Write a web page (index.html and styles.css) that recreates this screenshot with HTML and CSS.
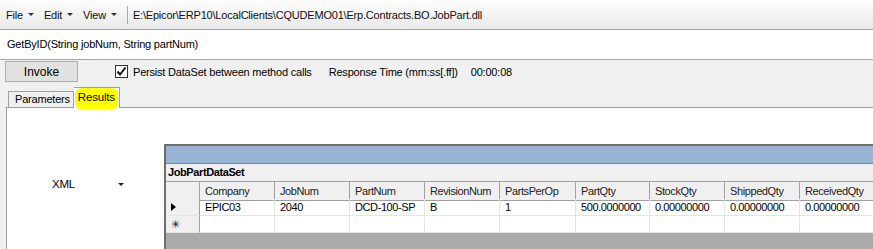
FILE: index.html
```html
<!DOCTYPE html>
<html lang="en">
<head>
  <meta charset="UTF-8">
  <title>Business Object Tester</title>
  <link rel="stylesheet" href="styles.css">
</head>
<body>
  <div class="menubar">
    <span class="menu">File <i class="caret"></i></span>
    <span class="menu">Edit <i class="caret"></i></span>
    <span class="menu">View <i class="caret"></i></span>
    <span class="sep"></span>
    <span class="path">E:\Epicor\ERP10\LocalClients\CQUDEMO01\Erp.Contracts.BO.JobPart.dll</span>
  </div>

  <div class="method">GetByID(String jobNum, String partNum)</div>

  <div class="toolbar">
    <button class="invoke">Invoke</button>
    <label class="persist">
      <span class="check">
        <svg width="11" height="11" viewBox="0 0 11 11"><path d="M1.5 5.5 L4 8.5 L9.5 1.5" fill="none" stroke="#111" stroke-width="2"/></svg>
      </span>
      Persist DataSet between method calls
    </label>
    <span class="resp-label">Response Time (mm:ss[.ff])</span>
    <span class="resp-value">00:00:08</span>
  </div>

  <div class="tabs">
    <div class="tab">Parameters</div>
    <div class="tab active"><span class="mark">Results</span></div>
  </div>

  <div class="panel">
    <div class="side">
      <div class="combo">
        <span>XML</span>
        <i class="drop"></i>
      </div>
    </div>
    <div class="grid-wrap">
      <div class="caption"></div>
      <div class="dataset">JobPartDataSet</div>
      <div class="grid">
        <div class="rh hd"></div>
        <div class="hd">Company</div>
        <div class="hd">JobNum</div>
        <div class="hd">PartNum</div>
        <div class="hd">RevisionNum</div>
        <div class="hd">PartsPerOp</div>
        <div class="hd">PartQty</div>
        <div class="hd">StockQty</div>
        <div class="hd">ShippedQty</div>
        <div class="hd">ReceivedQty</div>

        <div class="rh"><i class="arrow"></i></div>
        <div class="cell">EPIC03</div>
        <div class="cell">2040</div>
        <div class="cell">DCD-100-SP</div>
        <div class="cell">B</div>
        <div class="cell">1</div>
        <div class="cell">500.0000000</div>
        <div class="cell">0.00000000</div>
        <div class="cell">0.00000000</div>
        <div class="cell">0.00000000</div>

        <div class="rh star">&#x2733;</div>
        <div class="cell"></div>
        <div class="cell"></div>
        <div class="cell"></div>
        <div class="cell"></div>
        <div class="cell"></div>
        <div class="cell"></div>
        <div class="cell"></div>
        <div class="cell"></div>
        <div class="cell"></div>
      </div>
      <div class="empty"></div>
    </div>
  </div>
</body>
</html>
```

FILE: styles.css
```css
body {
  margin: 0;
  width: 873px;
  height: 249px;
  overflow: hidden;
  background-color: #f0f0f0;
  font-family: "Liberation Sans", Arial, sans-serif;
  font-size: 11px;
  letter-spacing: -0.2px;
  color: #000;
}

.menubar {
  height: 29px;
  display: flex;
  align-items: center;
  padding-left: 6px;
  background: linear-gradient(#fdfdfd, #f3f3f3 50%, #e9e9ea);
  border-bottom: 1px solid #a6a6ab;
  font-size: 11px;
  color: #111;
}

.menu {
  margin-right: 10px;
  display: flex;
  align-items: center;
}

.caret {
  display: inline-block;
  margin-left: 5px;
  border-left: 3px solid transparent;
  border-right: 3px solid transparent;
  border-top: 3px solid #333;
}

.sep {
  width: 1px;
  height: 18px;
  background-color: #a8a8a8;
  margin: 0 5px 0 0;
}

.method {
  height: 29px;
  line-height: 29px;
  padding-left: 7px;
  background-color: #fff;
  border-bottom: 1px solid #a6a6ab;
  font-size: 11px;
}

.toolbar {
  height: 26px;
  display: flex;
  align-items: center;
  padding-left: 5px;
}

.invoke {
  width: 73px;
  height: 21px;
  margin-top: -3px;
  background-color: #e1e1e1;
  border: 1px solid #adadad;
  font-family: "Liberation Sans", Arial, sans-serif;
  font-size: 12px;
  padding: 0;
}

.persist {
  display: flex;
  align-items: center;
  margin-left: 37px;
  margin-top: -3px;
}

.check {
  width: 11px;
  height: 11px;
  border: 1px solid #333;
  background-color: #fff;
  margin-right: 5px;
  display: flex;
}

.resp-label {
  margin-left: 17px;
  margin-top: -3px;
}

.resp-value {
  margin-left: 13px;
  margin-top: -3px;
}

.tabs {
  height: 21px;
  display: flex;
  align-items: flex-end;
  padding-left: 8px;
}

.tab {
  height: 15px;
  line-height: 15px;
  padding: 0 3px 0 6px;
  border: 1px solid #a0a0a0;
  border-bottom: none;
  background-color: #f0f0f0;
}

.tab.active {
  height: 20px;
  line-height: 18px;
  padding: 0 3px 0 2px;
  background-color: #fff;
  border-left: none;
  position: relative;
  top: 1px;
}

.mark {
  display: inline-block;
  background-color: #ffff00;
  border-radius: 6px;
  padding: 0 3px 3px 3px;
  margin: -6px -2px 0 -1px;
  line-height: 18px;
  font-size: 11.5px;
}

.panel {
  height: 142px;
  margin-left: 6px;
  border-top: 1px solid #a0a0a0;
  border-left: 1px solid #a0a0a0;
  background-color: #fff;
  display: flex;
  padding-top: 36px;
  box-sizing: border-box;
}

.side {
  width: 157px;
  flex-shrink: 0;
}

.combo {
  display: flex;
  align-items: center;
  margin-top: 34px;
  padding-left: 45px;
  font-size: 11.5px;
}

.drop {
  margin-left: 43px;
  border-left: 3px solid transparent;
  border-right: 3px solid transparent;
  border-top: 3px solid #222;
}

.grid-wrap {
  flex-shrink: 0;
  width: 720px;
  border-top: 2px solid #6e6e6e;
  border-left: 2px solid #6e6e6e;
  background-color: #ababab;
}

.caption {
  height: 17px;
  background-color: #98b4d2;
  border-bottom: 1px solid #7f7f7f;
}

.dataset {
  height: 17px;
  line-height: 17px;
  padding-left: 2px;
  background-color: #f0f0f0;
  border-bottom: 1px solid #a0a0a0;
  font-weight: bold;
  letter-spacing: -0.4px;
}

.grid {
  display: grid;
  grid-template-columns: 34px 75px 75px 75px 75px 76px 74px 75px 75px 75px;
  grid-auto-rows: 17px;
  background-color: #fff;
  letter-spacing: -0.4px;
}

.grid > div {
  box-sizing: border-box;
  padding-left: 5px;
  line-height: 16px;
  white-space: nowrap;
  overflow: hidden;
}

.hd {
  height: 19px;
  background-color: #f0f0f0;
  border-right: 1px solid #a0a0a0;
  border-bottom: 1px solid #a0a0a0;
  color: #222;
}

.grid > .hd {
  line-height: 18px;
}

.cell {
  border-right: 1px solid #e4e4e4;
  border-bottom: 1px solid #e4e4e4;
}

.rh {
  background-color: #f0f0f0;
  border-right: 1px solid #a0a0a0;
  border-bottom: 1px solid #e4e4e4;
  display: flex;
  align-items: center;
}

.arrow {
  border-top: 4px solid transparent;
  border-bottom: 4px solid transparent;
  border-left: 5px solid #000;
}

.star {
  font-size: 11px;
  color: #111;
}

.empty {
  height: 20px;
  background-color: #ababab;
}
```
